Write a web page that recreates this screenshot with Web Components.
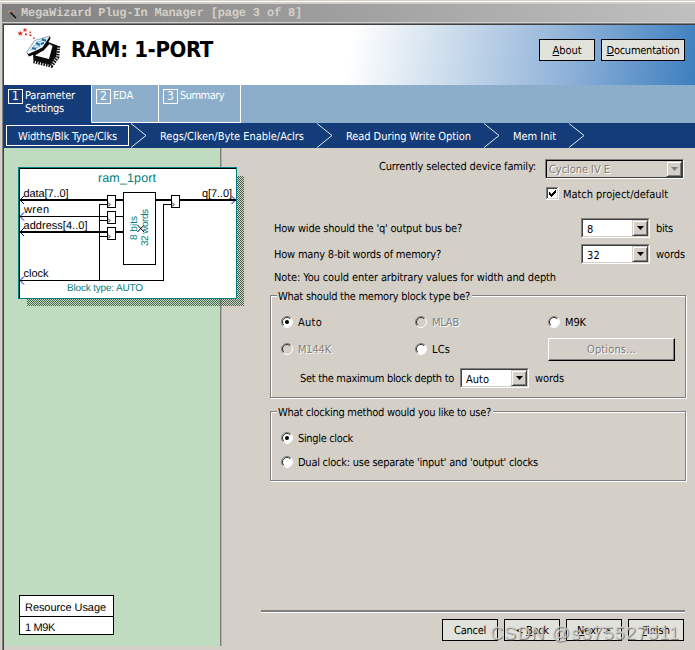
<!DOCTYPE html>
<html lang="en">
<head>
<meta charset="utf-8">
<title>MegaWizard Plug-In Manager</title>
<style>
  body {
    margin: 0;
    width: 695px;
    height: 650px;
    overflow: hidden;
    background: #d4d0c8;
    color: #000;
    font: 11px/13px "DejaVu Sans Condensed", "DejaVu Sans", sans-serif;
    font-stretch: condensed;
  }
</style>
</head>
<body>
<wizard-window></wizard-window>

<script>
// Single line of text set to an exact width by spreading its letter-spacing
class FitText extends HTMLElement {
  connectedCallback() {
    this.attachShadow({ mode: "open" });
    this.shadowRoot.innerHTML = `
      <style>
        :host {
          display: block;
          flex: none;
          white-space: nowrap;
          text-rendering: geometricPrecision;
        }
        span { display: inline-block; }
      </style>
      <span><slot></slot></span>
    `;
    const w = Number(this.getAttribute("w"));
    const span = this.shadowRoot.querySelector("span");
    if (w) {
      this.style.width = w + "px";
      const natural = span.getBoundingClientRect().width;
      span.style.letterSpacing = (w - natural) / this.textContent.length + "px";
    }
  }
}

class TitleBar extends HTMLElement {
  connectedCallback() {
    this.attachShadow({ mode: "open" });
    this.shadowRoot.innerHTML = `
      <style>
        :host {
          display: flex;
          align-items: center;
          height: 18px;
          margin-left: 2px;
          padding-left: 6px;
          gap: 4px;
          background: linear-gradient(90deg, #808080, #c0c0c0);
          color: #d4d0c8;
          font: bold 12px/18px "Liberation Mono", monospace;
        }
        svg { flex: none; margin-top: 2px; }
      </style>
      <svg width="9" height="9" viewBox="0 0 9 9">
        <path d="M2.500 2.500L8 8" stroke="#111" stroke-width="1.500"/>
        <path d="M0 2h1M2 0h1M5 1h1" stroke="#d8c860"/>
        <path d="M1 4h1M4 3h1" stroke="#c04030"/>
      </svg>
      <slot></slot>
    `;
  }
}

class FlatButton extends HTMLElement {
  connectedCallback() {
    this.attachShadow({ mode: "open" });
    this.shadowRoot.innerHTML = `
      <style>
        :host {
          display: flex;
          flex: none;
          box-sizing: border-box;
          justify-content: center;
          align-items: center;
          width: 56px;
          height: 22px;
          border: 1px solid #000;
          background: #e0e2db;
        }
      </style>
      <slot></slot>
    `;
  }
}

class WizardHeader extends HTMLElement {
  connectedCallback() {
    this.attachShadow({ mode: "open" });
    this.shadowRoot.innerHTML = `
      <style>
        :host {
          display: flex;
          height: 60px;
          background: linear-gradient(98deg, #fff 50%, #c6d8ea 66%, #8db0d8 82%, #3d7fbf 100%);
        }
        svg { margin: 1px 0 0 10px; flex: none; }
        h1 {
          margin: 12px 0 0 7px;
          width: 468px;
          font: bold 22px/27px "DejaVu Sans Condensed", sans-serif;
          font-stretch: condensed;
        }
        nav { display: flex; gap: 6px; margin-top: 14px; }
        .about { width: 56px; }
        .doc { width: 84px; }
      </style>
      <svg width="50" height="46" viewBox="0 0 50 46">
        <g fill="#e0301e">
          <path d="M3.500 6.500h2l.8-1.800l.8 1.800h2l-1.500 1.400l.6 1.900l-1.900-1l-1.900 1l.6-1.900z"/>
          <path d="M8.800 3.200h1.500l.7-1.500l.7 1.500h1.500l-1 1.100l.3 1.600l-1.500-.8l-1.500.8l.3-1.600z"/>
          <path d="M11 7.500h2v1.800h-2zM15.500 5.500h1.500v1.500h-1.500zM15.500 8.500h2v1.500h-2zM19.200 11.500h1.500v1.500h-1.500z"/>
        </g>
        <path d="M34 16l9.500 3.500l-1.500 11l-5.500 8.500l-17-4.500l-.5-6z" fill="#0a0a0a"/>
        <path d="M44.500 20l-1 11.500l-6 8.500l-18-4.500" fill="none" stroke="#111" stroke-width="3.500" stroke-dasharray="1.600 1"/>
        <path d="M21 29.500l9-5.500l5.500-6l3 2l-3.500 13z" fill="#fff"/>
        <path d="M12.500 26.500l8-12l15.500-4.500l-7 11.500l-14 6.500z" fill="#e6f3fa"/>
        <path d="M12.500 26.500l2 1.500l14-6.500l7.500-11.500l.5 2.500l-7 12l-14.500 6z" fill="#0a0a0a"/>
        <path d="M12.500 26.500l8-12l15.500-4.500" fill="none" stroke="#6b8da0" stroke-width=".7"/>
        <path d="M22 16.500l10-3M19 20.500l11-4M16.500 24l10-4" stroke="#7fb4d4"/>
        <path d="M28 13l4 2M22 17l4 2M27 18l3-1M18 22l4 1" stroke="#1c6fae" stroke-width="2"/>
      </svg>
      <h1><fit-text w="142">RAM: 1-PORT</fit-text></h1>
      <nav>
        <flat-button class="about"><fit-text w="29"><u>A</u>bout</fit-text></flat-button>
        <flat-button class="doc"><fit-text w="73"><u>D</u>ocumentation</fit-text></flat-button>
      </nav>
    `;
  }
}

class PageTab extends HTMLElement {
  connectedCallback() {
    this.attachShadow({ mode: "open" });
    this.shadowRoot.innerHTML = `
      <style>
        :host {
          display: flex;
          box-sizing: border-box;
          gap: 2px;
          padding: 4px 0 0 4px;
          border-right: 1px solid #fff;
          border-bottom: 1px solid #fff;
          background: #8caeca;
          color: #fff;
        }
        :host([active]) {
          background: #143c78;
          border-bottom-color: #143c78;
        }
        b {
          box-sizing: border-box;
          width: 15px;
          height: 15px;
          border: 1px solid #fff;
          font-weight: normal;
          font-size: 12px;
          text-align: center;
        }
      </style>
      <b>${this.getAttribute("num")}</b>
      <div><slot></slot></div>
    `;
  }
}

class StepItem extends HTMLElement {
  connectedCallback() {
    this.attachShadow({ mode: "open" });
    this.shadowRoot.innerHTML = `
      <style>
        :host { display: flex; align-items: center; height: 25px; color: #fff; }
        div {
          box-sizing: border-box;
          height: 21px;
          margin-right: 2px;
          padding: 4px 10px 0 12px;
          border: 1px solid transparent;
        }
        :host([active]) div { border-color: #fff; padding-left: 11px; padding-right: 11px; }
        svg { flex: none; }
      </style>
      <div><slot></slot></div>
      <svg width="16" height="25" viewBox="0 0 16 25">
        <path d="M0 .5L15 12.500L0 24.500" fill="none" stroke="#dfe7f0"/>
      </svg>
    `;
  }
}

class ComboBox extends HTMLElement {
  connectedCallback() {
    this.attachShadow({ mode: "open" });
    this.shadowRoot.innerHTML = `
      <style>
        :host {
          display: flex;
          flex: none;
          box-sizing: border-box;
          height: 20px;
          width: 69px;
          border: 1px solid;
          border-color: #808080 #fff #fff #808080;
          background: #fff;
        }
        .inner {
          display: flex;
          flex: 1;
          justify-content: space-between;
          padding-left: 4px;
          border: 1px solid;
          border-color: #404040 #d4d0c8 #d4d0c8 #404040;
        }
        .value { padding-top: 3px; }
        .arrow {
          display: flex;
          box-sizing: border-box;
          justify-content: center;
          width: 16px;
          height: 16px;
          padding-top: 5px;
          background: #d4d0c8;
          border: 1px solid;
          border-color: #d4d0c8 #404040 #404040 #d4d0c8;
          box-shadow: inset 1px 1px #fff, inset -1px -1px #808080;
        }
        :host([disabled]) { background: #d4d0c8; color: #808080; text-shadow: 1px 1px #fff; }
        :host([disabled]) .inner { padding-left: 2px; border-color: #000 #404040 #404040 #000; }
        :host([disabled]) .value { padding-top: 2px; }
        :host([disabled]) path { fill: #808080; }
      </style>
      <div class="inner">
        <span class="value"><slot></slot></span>
        <span class="arrow"><svg width="7" height="4" viewBox="0 0 7 4"><path d="M0 0h7L3.500 4z"/></svg></span>
      </div>
    `;
  }
}

class CheckBox extends HTMLElement {
  connectedCallback() {
    this.attachShadow({ mode: "open" });
    this.shadowRoot.innerHTML = `
      <style>
        :host { display: flex; gap: 4px; }
        svg { flex: none; }
        div { padding-top: 1px; }
      </style>
      <svg width="13" height="13" viewBox="0 0 13 13" shape-rendering="crispEdges">
        <path d="M0 0h13v13H0z" fill="#fff"/>
        <path d="M.5 12V.5H12" fill="none" stroke="#808080"/>
        <path d="M1.500 11V1.500H11" fill="none" stroke="#404040"/>
        <path d="M2 11.500h9.500V2" fill="none" stroke="#d4d0c8"/>
        <path d="M3 5v3h1v1h1v1h1v-1h1v-1h1v-1h1v-1h1V3H9v1H8v1H7v1H6v1H5V6H4V5z"/>
      </svg>
      <div><slot></slot></div>
    `;
  }
}

class RadioButton extends HTMLElement {
  connectedCallback() {
    this.attachShadow({ mode: "open" });
    const off = this.hasAttribute("disabled");
    const dot = this.hasAttribute("checked") ? `<circle cx="6" cy="6" r="2"/>` : "";
    this.shadowRoot.innerHTML = `
      <style>
        :host { display: flex; gap: 5px; height: 13px; }
        :host([disabled]) { color: #808080; text-shadow: 1px 1px #fff; }
        svg { flex: none; }
      </style>
      <svg width="12" height="12" viewBox="0 0 12 12">
        <circle cx="6" cy="6" r="5" fill="${off ? "#d4d0c8" : "#fff"}"/>
        <path d="M2.100 9.900A5.500 5.500 0 0 1 9.900 2.100" fill="none" stroke="#808080"/>
        <path d="M2.800 9.200A4.500 4.500 0 0 1 9.200 2.800" fill="none" stroke="#303030"/>
        <path d="M2.100 9.900A5.500 5.500 0 0 0 9.900 2.100" fill="none" stroke="#fff"/>
        ${dot}
      </svg>
      <slot></slot>
    `;
  }
}

class GroupBox extends HTMLElement {
  connectedCallback() {
    this.attachShadow({ mode: "open" });
    this.shadowRoot.innerHTML = `
      <style>
        :host {
          display: block;
          box-sizing: border-box;
          width: 416px;
          border: 1px solid #808080;
          box-shadow: 1px 1px #fff, inset 1px 1px #fff;
        }
        .legend {
          width: fit-content;
          margin: -6px 0 0 6px;
          padding: 0 2px 0 1px;
          background: #d4d0c8;
        }
      </style>
      <div class="legend"><slot name="legend"></slot></div>
      <slot></slot>
    `;
  }
}

// Symbol of the configured memory, with its ports, registers and clock net
class BlockDiagram extends HTMLElement {
  connectedCallback() {
    this.attachShadow({ mode: "open" });
    const register = (x, y) => `
      <rect x="${x + .5}" y="${y + .5}" width="8" height="12" fill="#fff" stroke="#000"/>
      <path d="M${x + 1} ${y + 7.500}l2 2l-2 2" fill="none" stroke="#000"/>`;
    const pin = y => `<path d="M24 ${y - 4}l-4 4l4 4" fill="none" stroke="#0000c0"/>`;
    this.shadowRoot.innerHTML = `
      <style>
        :host { display: block; position: relative; width: 227px; height: 140px; }
        svg { display: block; }
        text { font: 11px "Liberation Sans", Arial, sans-serif; text-rendering: geometricPrecision; }
        .teal { fill: #008080; }
      </style>
      <svg width="227" height="140" viewBox="18 167 227 140">
        <defs>
          <pattern id="mesh" width="2" height="2" patternUnits="userSpaceOnUse">
            <path d="M0 0h1v1H0zM1 1h1v1H1z" fill="#47654c" shape-rendering="crispEdges"/>
          </pattern>
        </defs>
        <rect x="27" y="176" width="217" height="130" fill="url(#mesh)"/>
        <rect x="18.500" y="167.500" width="218" height="131" fill="#fff" stroke="#008080"/>
        <path d="M19.500 298V168.500H236" fill="none" stroke="#000"/>
        ${pin(200)}${pin(216.5)}${pin(232)}${pin(280.5)}
        <path d="M231.500 196l4 4l-4 4" fill="none" stroke="#0000c0"/>
        <g shape-rendering="crispEdges" stroke="#000" fill="none">
          <path d="M20 200h103M155 200h81M20 232h103" stroke-width="2"/>
          <path d="M20 216.500h103M20 280.500H163.500V204.500H171M99.500 280V204.500H107M99 220.500h8M99 236.500h8"/>
          <rect x="123.500" y="192.500" width="32" height="72" fill="#fff"/>
        </g>
        ${register(107, 195)}${register(107, 211)}${register(107, 227)}${register(171, 195)}
        <path d="M137.500 225l6.500 7M144 225l-6.500 7" stroke="#000"/>
        <text x="98" y="182" class="teal" textLength="58" style="font-size:12.500px">ram_1port</text>
        <text x="23.500" y="197" textLength="45">data[7..0]</text>
        <text x="24" y="213" textLength="25">wren</text>
        <text x="23.500" y="229" textLength="64">address[4..0]</text>
        <text x="23.500" y="277" textLength="25">clock</text>
        <text x="202" y="197" textLength="30">q[7..0]</text>
        <text transform="translate(137 240) rotate(-90)" class="teal" textLength="24" style="font-size:10px">8 bits</text>
        <text transform="translate(148 246) rotate(-90)" class="teal" textLength="37" style="font-size:10px">32 words</text>
        <text x="67" y="291" class="teal" textLength="76" style="font-size:10px">Block type: AUTO</text>
      </svg>
    `;
  }
}

class ResourceUsage extends HTMLElement {
  connectedCallback() {
    this.attachShadow({ mode: "open" });
    this.shadowRoot.innerHTML = `
      <style>
        :host {
          display: block;
          box-sizing: border-box;
          width: 95px;
          height: 40px;
          border: 1px solid #000;
          background: #fff;
          font: 11px/13px "Liberation Sans", Arial, sans-serif;
        }
        div { padding: 6px 0 1px 5px; }
        div + div { border-top: 1px solid #000; padding-top: 5px; padding-bottom: 0; }
      </style>
      <div><fit-text w="81">Resource Usage</fit-text></div>
      <div><fit-text w="30">1 M9K</fit-text></div>
    `;
  }
}

class SettingsForm extends HTMLElement {
  connectedCallback() {
    this.attachShadow({ mode: "open" });
    this.shadowRoot.innerHTML = `
      <style>
        :host { display: block; min-width: 0; padding: 11px 10px 0 39px; }
        .row { display: flex; align-items: center; height: 20px; }
        .device { justify-content: flex-end; align-items: flex-start; gap: 9px; margin-right: 1px; }
        .device > fit-text { margin-top: 1px; }
        .family { width: 139px; }
        .match { margin: 8px 0 0 285px; }
        .q { margin: 17px 0 0 13px; gap: 6px; }
        .words { margin: 6px 0 0 13px; gap: 6px; }
        .question { width: 301px; }
        .note { margin: 7px 0 0 13px; }
        .memory { height: 103px; margin: 11px 0 0 9px; }
        .grid {
          display: grid;
          grid-template-columns: 134px 133px 127px;
          grid-template-rows: 13px 23px;
          row-gap: 9px;
          align-items: center;
          margin: 13px 0 0 10px;
        }
        .options {
          display: flex;
          box-sizing: border-box;
          justify-content: center;
          align-items: center;
          height: 23px;
          border: 1px solid;
          border-color: #fff #000 #000 #fff;
          box-shadow: inset -1px -1px #808080;
          color: #808080;
          text-shadow: 1px 1px #fff;
        }
        .depth { margin: 7px 0 0 29px; gap: 6px; }
        .clocking { height: 70px; margin: 13px 0 0 9px; }
        .stack { display: flex; flex-direction: column; gap: 11px; margin: 13px 0 0 10px; }
        .rule {
          width: 424px;
          height: 1px;
          margin-top: 129px;
          background: #808080;
          border-top: 1px solid #808080;
          border-bottom: 1px solid #fff;
        }
        .buttons { display: flex; gap: 6px; justify-content: flex-end; margin: 6px 1px 0 0; }
      </style>
      <div class="row device">
        <fit-text w="157">Currently selected device family:</fit-text>
        <combo-box class="family" disabled><fit-text w="61">Cyclone IV E</fit-text></combo-box>
      </div>
      <check-box class="match"><fit-text w="105">Match project/default</fit-text></check-box>
      <div class="row q">
        <div class="question"><fit-text w="188">How wide should the 'q' output bus be?</fit-text></div>
        <combo-box>8</combo-box>
        <fit-text w="17">bits</fit-text>
      </div>
      <div class="row words">
        <div class="question"><fit-text w="167">How many 8-bit words of memory?</fit-text></div>
        <combo-box><fit-text w="13">32</fit-text></combo-box>
        <fit-text w="29">words</fit-text>
      </div>
      <div class="note"><fit-text w="282">Note: You could enter arbitrary values for width and depth</fit-text></div>

      <group-box class="memory">
        <fit-text slot="legend" w="192">What should the memory block type be?</fit-text>
        <div class="grid">
          <radio-button checked><fit-text w="24">Auto</fit-text></radio-button>
          <radio-button disabled><fit-text w="27">MLAB</fit-text></radio-button>
          <radio-button><fit-text w="21">M9K</fit-text></radio-button>
          <radio-button disabled><fit-text w="33">M144K</fit-text></radio-button>
          <radio-button><fit-text w="18">LCs</fit-text></radio-button>
          <div class="options"><fit-text w="49">Options...</fit-text></div>
        </div>
        <div class="row depth">
          <fit-text w="154">Set the maximum block depth to</fit-text>
          <combo-box><fit-text w="23">Auto</fit-text></combo-box>
          <fit-text w="29">words</fit-text>
        </div>
      </group-box>

      <group-box class="clocking">
        <fit-text slot="legend" w="213">What clocking method would you like to use?</fit-text>
        <div class="stack">
          <radio-button checked><fit-text w="55">Single clock</fit-text></radio-button>
          <radio-button><fit-text w="240">Dual clock: use separate 'input' and 'output' clocks</fit-text></radio-button>
        </div>
      </group-box>

      <div class="rule"></div>
      <div class="buttons">
        <flat-button><fit-text w="32">Cancel</fit-text></flat-button>
        <flat-button><fit-text w="33">&lt; <u>B</u>ack</fit-text></flat-button>
        <flat-button><fit-text w="34"><u>N</u>ext &gt;</fit-text></flat-button>
        <flat-button><fit-text w="28"><u>F</u>inish</fit-text></flat-button>
      </div>
    `;
  }
}

class WizardWindow extends HTMLElement {
  connectedCallback() {
    this.attachShadow({ mode: "open" });
    this.shadowRoot.innerHTML = `
      <style>
        :host {
          display: block;
          position: relative;
          width: 695px;
          height: 650px;
          box-sizing: border-box;
          border-top: 1px solid #d4d0c8;
          box-shadow: inset 0 1px #fff;
          padding-top: 3px;
        }
        .frame {
          box-sizing: border-box;
          height: 627px;
          margin: 1px 0 0 2px;
          border-top: 1px solid #808080;
          border-left: 1px solid #808080;
        }
        .client {
          box-sizing: border-box;
          height: 626px;
          border-top: 1px solid #404040;
          border-left: 1px solid #404040;
        }
        .tabs { display: flex; height: 38px; background: #8caeca; }
        .tab1 { width: 88px; }
        .tab2 { width: 67px; }
        .tab3 { width: 82px; }
        .steps { display: flex; height: 25px; padding-left: 2px; background: #143c78; }
        .body { display: grid; grid-template-columns: 218px 1fr; }
        .side {
          box-sizing: border-box;
          height: 498px;
          padding: 19px 0 0 14px;
          border-right: 1px solid #b0aea8;
          box-shadow: inset -1px 0 #808080;
          background: #c0dcc0;
        }
        .usage { margin: 288px 0 0 1px; }
        .mark {
          position: absolute;
          left: 490px;
          top: 621px;
          color: rgba(222, 220, 216, .75);
          font: 18px/22px "Liberation Sans", Arial, sans-serif;
          text-shadow: 1px 1px 1px #777;
        }
      </style>
      <title-bar><fit-text w="281">MegaWizard Plug-In Manager [page 3 of 8]</fit-text></title-bar>
      <div class="frame">
        <div class="client">
          <wizard-header></wizard-header>
          <div class="tabs">
            <page-tab class="tab1" num="1" active>
              <fit-text w="50">Parameter</fit-text><fit-text w="39">Settings</fit-text>
            </page-tab>
            <page-tab class="tab2" num="2"><fit-text w="20">EDA</fit-text></page-tab>
            <page-tab class="tab3" num="3"><fit-text w="44">Summary</fit-text></page-tab>
          </div>
          <div class="steps">
            <step-item active><fit-text w="99">Widths/Blk Type/Clks</fit-text></step-item>
            <step-item><fit-text w="144">Regs/Clken/Byte Enable/Aclrs</fit-text></step-item>
            <step-item><fit-text w="125">Read During Write Option</fit-text></step-item>
            <step-item><fit-text w="43">Mem Init</fit-text></step-item>
          </div>
          <div class="body">
            <div class="side">
              <block-diagram></block-diagram>
              <resource-usage class="usage"></resource-usage>
            </div>
            <settings-form></settings-form>
          </div>
        </div>
      </div>
      <fit-text class="mark" w="190">CSDN @s375527511</fit-text>
    `;
  }
}

customElements.define("fit-text", FitText);
customElements.define("title-bar", TitleBar);
customElements.define("flat-button", FlatButton);
customElements.define("wizard-header", WizardHeader);
customElements.define("page-tab", PageTab);
customElements.define("step-item", StepItem);
customElements.define("combo-box", ComboBox);
customElements.define("check-box", CheckBox);
customElements.define("radio-button", RadioButton);
customElements.define("group-box", GroupBox);
customElements.define("block-diagram", BlockDiagram);
customElements.define("resource-usage", ResourceUsage);
customElements.define("settings-form", SettingsForm);
customElements.define("wizard-window", WizardWindow);
</script>
</body>
</html>
